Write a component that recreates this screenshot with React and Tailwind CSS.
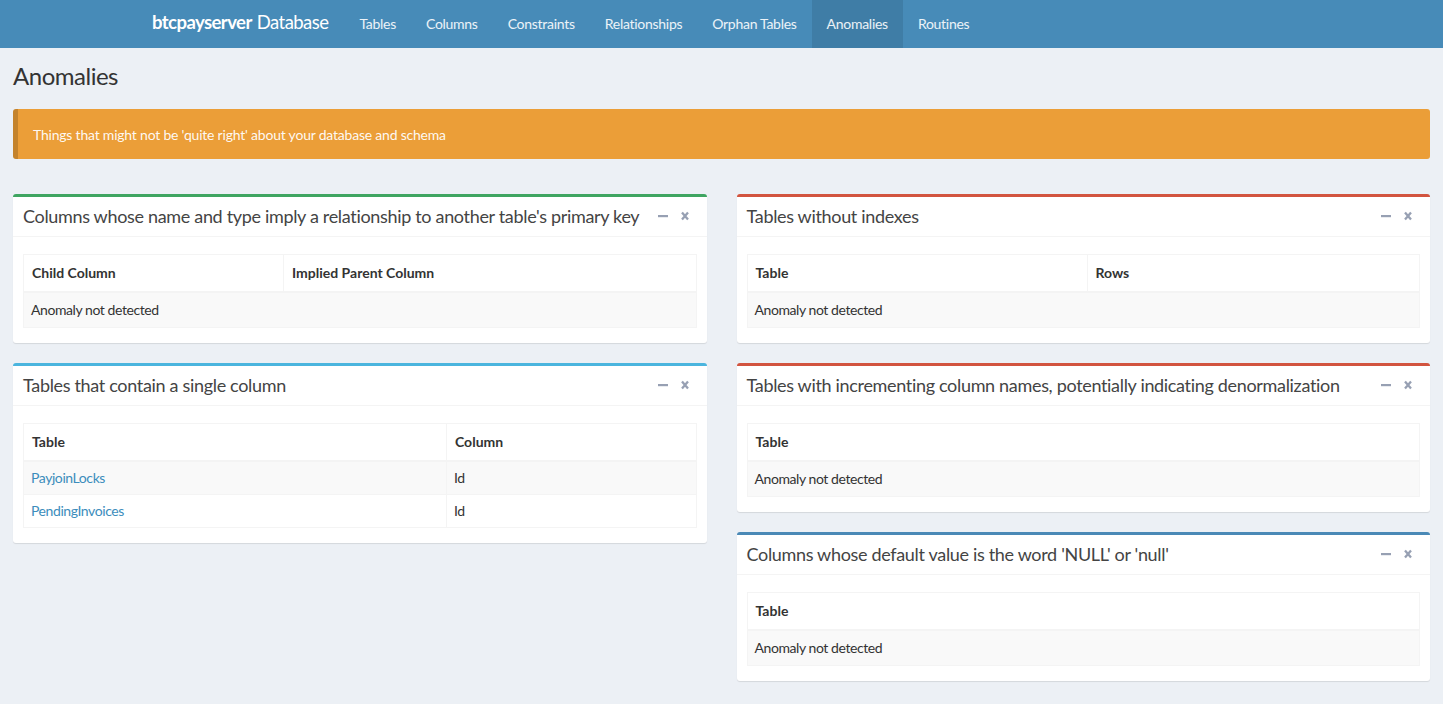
import React from "react";

const font = { fontFamily: "Lato, 'Liberation Sans', sans-serif" };

function Tools() {
  return (
    <div className="flex items-center gap-[13px] pr-[8px]">
      <svg width="10" height="12" viewBox="0 0 10 12"><rect x="0" y="5" width="10" height="2.2" fill="#97a0b3" /></svg>
      <svg width="8" height="12" viewBox="0 0 8 12"><path d="M1 2.5 L7 9.5 M7 2.5 L1 9.5" stroke="#97a0b3" strokeWidth="2.3" /></svg>
    </div>
  );
}

function Box({ color, title, cols, rows }) {
  return (
    <div className="bg-white rounded-[3px] shadow-[0_1px_1px_rgba(0,0,0,0.1)] mb-[20px]" style={{ borderTop: `3px solid ${color}` }}>
      <div className="flex items-center justify-between h-[40px] px-[10px] pb-[2px] border-b border-[#f4f4f4]">
        <h3 className="text-[18px] text-[#444] leading-[20px] whitespace-nowrap tracking-[-0.018em]">{title}</h3>
        <Tools />
      </div>
      <div className="px-[10px] pt-[17px] pb-[15px]">
        <table className="w-full border border-[#f4f4f4] border-collapse text-[14px] text-[#333]">
          <thead>
            <tr className="border-b-2 border-[#f4f4f4]">
              {cols.map((c, i) => (
                <th key={i} className={`text-left font-bold px-[8px] py-[8px] leading-[20px] border border-[#f4f4f4] border-b-2 ${c.w || ""}`}>{c.t}</th>
              ))}
            </tr>
          </thead>
          <tbody className="tracking-[-0.03em]">
            {rows ? (
              rows.map((r, i) => (
                <tr key={i} className={i % 2 === 0 ? "bg-[#f9f9f9]" : "bg-white"}>
                  <td className="px-[7px] py-[6px] leading-[20px] border border-[#f4f4f4]"><span className="text-[#3c8dbc]">{r[0]}</span></td>
                  <td className="px-[7px] py-[6px] leading-[20px] border border-[#f4f4f4]">{r[1]}</td>
                </tr>
              ))
            ) : (
              <tr className="bg-[#f9f9f9]">
                <td colSpan={cols.length} className="px-[7px] py-[7px] leading-[20px] border border-[#f4f4f4]">Anomaly not detected</td>
              </tr>
            )}
          </tbody>
        </table>
      </div>
    </div>
  );
}

export default function App() {
  const nav = ["Tables", "Columns", "Constraints", "Relationships", "Orphan Tables", "Anomalies", "Routines"];
  return (
    <div className="min-h-[704px] bg-[#ecf0f5]" style={font}>
      <header className="h-[48px] bg-[#478bb8] flex">
        <div className="flex ml-[137px]">
          <div className="pl-[15px] pr-[16px] flex items-center text-white text-[18.5px] tracking-[-0.03em] pb-[2px]">
            <span className="font-bold">btcpayserver</span>
            <span className="ml-[5px]">Database</span>
          </div>
          <nav className="flex">
            {nav.map((n) => (
              <div key={n} className={`px-[15px] flex items-center text-[14px] text-white/90 tracking-[-0.02em] pb-[2px] ${n === "Anomalies" ? "bg-[#3f7da6]" : ""}`}>{n}</div>
            ))}
          </nav>
        </div>
      </header>
      <div className="px-[13px]">
        <h1 className="text-[24px] text-[#333] pt-[14px] leading-[27px] tracking-[-0.02em]">Anomalies</h1>
        <div className="mt-[20px] rounded-[3px] bg-[#eb9e38] border-l-[5px] border-[#c4832c] pl-[15px] pr-[30px] h-[50px] flex items-center text-[14px] text-white/95 tracking-[-0.015em]">
          Things that might not be 'quite right' about your database and schema
        </div>
        <div className="grid grid-cols-2 gap-x-[30px] mt-[35px]">
          <div>
            <Box color="#3fa561" title="Columns whose name and type imply a relationship to another table's primary key"
              cols={[{ t: "Child Column", w: "w-[260px]" }, { t: "Implied Parent Column" }]} />
            <Box color="#4bb5de" title="Tables that contain a single column"
              cols={[{ t: "Table", w: "w-[423px]" }, { t: "Column" }]}
              rows={[["PayjoinLocks", "Id"], ["PendingInvoices", "Id"]]} />
          </div>
          <div>
            <Box color="#d2543f" title="Tables without indexes" cols={[{ t: "Table", w: "w-[340px]" }, { t: "Rows" }]} />
            <Box color="#d2543f" title="Tables with incrementing column names, potentially indicating denormalization" cols={[{ t: "Table" }]} />
            <Box color="#4a89b6" title="Columns whose default value is the word 'NULL' or 'null'" cols={[{ t: "Table" }]} />
          </div>
        </div>
      </div>
    </div>
  );
}
